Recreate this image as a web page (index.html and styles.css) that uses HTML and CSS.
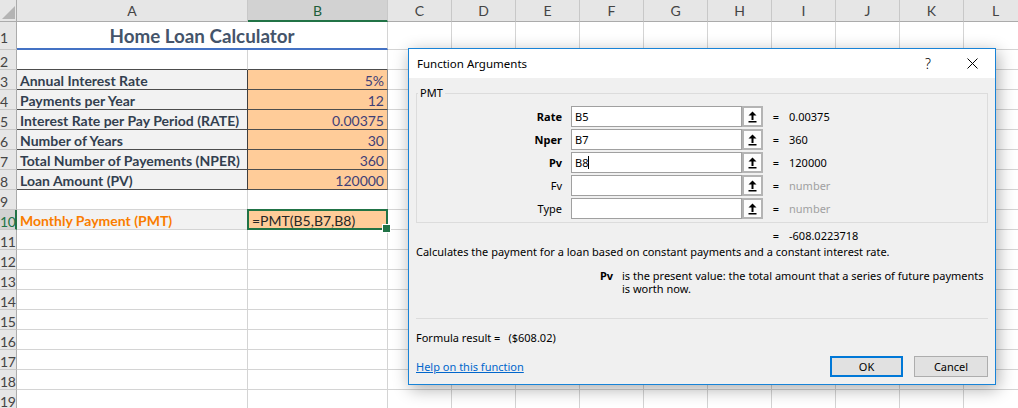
FILE: index.html
```html
<!DOCTYPE html>
<html lang="en">
<head>
<meta charset="utf-8">
<title>Home Loan Calculator - Function Arguments</title>
<link rel="stylesheet" href="styles.css">
</head>
<body>
<div class="sheet">
  <div class="corner"></div>
  <div class="ch">A</div><div class="ch sel">B</div><div class="ch">C</div><div class="ch">D</div><div class="ch">E</div><div class="ch">F</div><div class="ch">G</div><div class="ch">H</div><div class="ch">I</div><div class="ch">J</div><div class="ch">K</div><div class="ch">L</div>

  <div class="rh">1</div><div class="title">Home Loan Calculator</div>
  <div class="c"></div><div class="c"></div><div class="c"></div><div class="c"></div><div class="c"></div><div class="c"></div><div class="c"></div><div class="c"></div><div class="c"></div><div class="c"></div>

  <div class="rh">2</div><div class="c edge"></div><div class="c edge"></div>
  <div class="c"></div><div class="c"></div><div class="c"></div><div class="c"></div><div class="c"></div><div class="c"></div><div class="c"></div><div class="c"></div><div class="c"></div><div class="c"></div>

  <div class="rh">3</div><div class="c lbl">Annual Interest Rate</div><div class="c inp">5%</div>
  <div class="c"></div><div class="c"></div><div class="c"></div><div class="c"></div><div class="c"></div><div class="c"></div><div class="c"></div><div class="c"></div><div class="c"></div><div class="c"></div>

  <div class="rh">4</div><div class="c lbl">Payments per Year</div><div class="c inp">12</div>
  <div class="c"></div><div class="c"></div><div class="c"></div><div class="c"></div><div class="c"></div><div class="c"></div><div class="c"></div><div class="c"></div><div class="c"></div><div class="c"></div>

  <div class="rh">5</div><div class="c lbl">Interest Rate per Pay Period (RATE)</div><div class="c inp">0.00375</div>
  <div class="c"></div><div class="c"></div><div class="c"></div><div class="c"></div><div class="c"></div><div class="c"></div><div class="c"></div><div class="c"></div><div class="c"></div><div class="c"></div>

  <div class="rh">6</div><div class="c lbl">Number of Years</div><div class="c inp">30</div>
  <div class="c"></div><div class="c"></div><div class="c"></div><div class="c"></div><div class="c"></div><div class="c"></div><div class="c"></div><div class="c"></div><div class="c"></div><div class="c"></div>

  <div class="rh">7</div><div class="c lbl">Total Number of Payements (NPER)</div><div class="c inp">360</div>
  <div class="c"></div><div class="c"></div><div class="c"></div><div class="c"></div><div class="c"></div><div class="c"></div><div class="c"></div><div class="c"></div><div class="c"></div><div class="c"></div>

  <div class="rh">8</div><div class="c lbl">Loan Amount (PV)</div><div class="c inp">120000</div>
  <div class="c"></div><div class="c"></div><div class="c"></div><div class="c"></div><div class="c"></div><div class="c"></div><div class="c"></div><div class="c"></div><div class="c"></div><div class="c"></div>

  <div class="rh">9</div><div class="c"></div><div class="c"></div>
  <div class="c"></div><div class="c"></div><div class="c"></div><div class="c"></div><div class="c"></div><div class="c"></div><div class="c"></div><div class="c"></div><div class="c"></div><div class="c"></div>

  <div class="rh sel">10</div><div class="c pmt">Monthly Payment (PMT)</div><div class="c active">=PMT(B5,B7,B8)</div>
  <div class="c"></div><div class="c"></div><div class="c"></div><div class="c"></div><div class="c"></div><div class="c"></div><div class="c"></div><div class="c"></div><div class="c"></div><div class="c"></div>

  <div class="rh">11</div><div class="c"></div><div class="c"></div>
  <div class="c"></div><div class="c"></div><div class="c"></div><div class="c"></div><div class="c"></div><div class="c"></div><div class="c"></div><div class="c"></div><div class="c"></div><div class="c"></div>

  <div class="rh">12</div><div class="c"></div><div class="c"></div>
  <div class="c"></div><div class="c"></div><div class="c"></div><div class="c"></div><div class="c"></div><div class="c"></div><div class="c"></div><div class="c"></div><div class="c"></div><div class="c"></div>

  <div class="rh">13</div><div class="c"></div><div class="c"></div>
  <div class="c"></div><div class="c"></div><div class="c"></div><div class="c"></div><div class="c"></div><div class="c"></div><div class="c"></div><div class="c"></div><div class="c"></div><div class="c"></div>

  <div class="rh">14</div><div class="c"></div><div class="c"></div>
  <div class="c"></div><div class="c"></div><div class="c"></div><div class="c"></div><div class="c"></div><div class="c"></div><div class="c"></div><div class="c"></div><div class="c"></div><div class="c"></div>

  <div class="rh">15</div><div class="c"></div><div class="c"></div>
  <div class="c"></div><div class="c"></div><div class="c"></div><div class="c"></div><div class="c"></div><div class="c"></div><div class="c"></div><div class="c"></div><div class="c"></div><div class="c"></div>

  <div class="rh">16</div><div class="c"></div><div class="c"></div>
  <div class="c"></div><div class="c"></div><div class="c"></div><div class="c"></div><div class="c"></div><div class="c"></div><div class="c"></div><div class="c"></div><div class="c"></div><div class="c"></div>

  <div class="rh">17</div><div class="c"></div><div class="c"></div>
  <div class="c"></div><div class="c"></div><div class="c"></div><div class="c"></div><div class="c"></div><div class="c"></div><div class="c"></div><div class="c"></div><div class="c"></div><div class="c"></div>

  <div class="rh">18</div><div class="c"></div><div class="c"></div>
  <div class="c"></div><div class="c"></div><div class="c"></div><div class="c"></div><div class="c"></div><div class="c"></div><div class="c"></div><div class="c"></div><div class="c"></div><div class="c"></div>

  <div class="rh">19</div><div class="c"></div><div class="c"></div>
  <div class="c"></div><div class="c"></div><div class="c"></div><div class="c"></div><div class="c"></div><div class="c"></div><div class="c"></div><div class="c"></div><div class="c"></div><div class="c"></div>
</div>

<div class="dialog">
  <div class="titlebar">
    <span class="ttl">Function Arguments</span>
    <span class="help">?</span>
    <svg class="close" width="11" height="11" viewBox="0 0 11 11"><path d="M0.5 0.5 L10.5 10.5 M10.5 0.5 L0.5 10.5" stroke="#000" stroke-width="1" fill="none"/></svg>
  </div>
  <div class="dbody">
    <fieldset class="group">
      <legend>PMT</legend>
      <div class="args">
        <span class="lab b">Rate</span><span class="box">B5</span><span class="ref"><svg width="9" height="12" viewBox="0 0 9 12"><path d="M4.5 0.5 L8.5 4.5 H5.5 V9 H3.5 V4.5 H0.5 Z" fill="#000"/><rect x="0.5" y="10" width="8" height="1.5" fill="#000"/></svg></span><span class="eq">=</span><span class="val">0.00375</span>
        <span class="lab b">Nper</span><span class="box">B7</span><span class="ref"><svg width="9" height="12" viewBox="0 0 9 12"><path d="M4.5 0.5 L8.5 4.5 H5.5 V9 H3.5 V4.5 H0.5 Z" fill="#000"/><rect x="0.5" y="10" width="8" height="1.5" fill="#000"/></svg></span><span class="eq">=</span><span class="val">360</span>
        <span class="lab b">Pv</span><span class="box">B8<i class="caret"></i></span><span class="ref"><svg width="9" height="12" viewBox="0 0 9 12"><path d="M4.5 0.5 L8.5 4.5 H5.5 V9 H3.5 V4.5 H0.5 Z" fill="#000"/><rect x="0.5" y="10" width="8" height="1.5" fill="#000"/></svg></span><span class="eq">=</span><span class="val">120000</span>
        <span class="lab">Fv</span><span class="box"></span><span class="ref"><svg width="9" height="12" viewBox="0 0 9 12"><path d="M4.5 0.5 L8.5 4.5 H5.5 V9 H3.5 V4.5 H0.5 Z" fill="#000"/><rect x="0.5" y="10" width="8" height="1.5" fill="#000"/></svg></span><span class="eq">=</span><span class="val muted">number</span>
        <span class="lab">Type</span><span class="box"></span><span class="ref"><svg width="9" height="12" viewBox="0 0 9 12"><path d="M4.5 0.5 L8.5 4.5 H5.5 V9 H3.5 V4.5 H0.5 Z" fill="#000"/><rect x="0.5" y="10" width="8" height="1.5" fill="#000"/></svg></span><span class="eq">=</span><span class="val muted">number</span>
      </div>
    </fieldset>
    <div class="result"><span class="eq">=</span><span class="val">-608.0223718</span></div>
    <p class="desc">Calculates the payment for a loan based on constant payments and a constant interest rate.</p>
    <div class="argdesc"><b>Pv</b><span>is the present value: the total amount that a series of future payments is worth now.</span></div>
    <div class="sep"></div>
    <div class="formula">Formula result =<span class="fval">($608.02)</span></div>
    <div class="footer">
      <a class="helplink" href="#">Help on this function</a>
      <button class="btn ok" type="button">OK</button>
      <button class="btn" type="button">Cancel</button>
    </div>
  </div>
</div>
</body>
</html>
```
FILE: styles.css
```css
* { box-sizing: border-box; }
html, body { margin: 0; padding: 0; }
body {
  width: 1018px;
  height: 408px;
  overflow: hidden;
  background: #fff;
  position: relative;
  font-family: Lato, "Liberation Sans", sans-serif;
}

/* ---------- spreadsheet ---------- */
.sheet {
  display: grid;
  grid-template-columns: 17px 231px 140px repeat(10, 64px);
  grid-template-rows: 22px 28px repeat(18, 20px);
  font-size: 14px;
  color: #000;
  width: 1029px;
}
.corner {
  background: #e6e6e6;
  border-right: 1px solid #ababab;
  border-bottom: 1px solid #ababab;
  position: relative;
}
.corner::after {
  content: "";
  position: absolute;
  right: 1px;
  bottom: 2px;
  border-style: solid;
  border-width: 0 0 13px 13px;
  border-color: transparent transparent #b4b4b4 transparent;
}
.ch {
  background: #e6e6e6;
  border-right: 1px solid #c8c8c8;
  border-bottom: 1px solid #ababab;
  text-align: center;
  line-height: 22px;
  color: #444;
}
.ch.sel {
  background: #d2d2d2;
  border-bottom: 2px solid #217346;
  color: #1e5e3a;
}
.rh {
  background: #e6e6e6;
  border-right: 1px solid #ababab;
  border-bottom: 1px solid #c8c8c8;
  padding: 3px 0 0 0;
  display: flex;
  align-items: center;
  color: #444;
  letter-spacing: -0.3px;
}
.rh.sel {
  background: #d2d2d2;
  border-right: 2px solid #217346;
  color: #217346;
}
.c {
  border-right: 1px solid #d4d4d4;
  border-bottom: 1px solid #d4d4d4;
  white-space: nowrap;
  padding-top: 3px;
  line-height: 16px;
}
.title {
  grid-column: span 2;
  border-bottom: 2px solid #4472c4;
  border-right: 1px solid #d4d4d4;
  display: flex;
  align-items: center;
  justify-content: center;
  padding-top: 1px;
  font-weight: 700;
  font-size: 18.8px;
  color: #44546a;
}
.c.edge { border-bottom-color: #4d4d4d; }
.c.lbl {
  background: #f2f2f2;
  border-right-color: #3f3f3f;
  border-bottom-color: #4d4d4d;
  padding-left: 3px;
  font-weight: 700;
  color: #333f4f;
}
.c.inp {
  background: #ffcc99;
  border-right-color: #8c8c8c;
  border-bottom-color: #4d4d4d;
  text-align: right;
  padding-right: 3px;
  color: #3f3f76;
}
.c.pmt {
  background: #f2f2f2;
  padding-left: 3px;
  font-weight: 700;
  color: #fa7d00;
}
.c.active {
  background: #ffcc99;
  position: relative;
  padding-left: 4px;
  color: #262626;
}
.c.active::after {
  content: "";
  position: absolute;
  left: -1px;
  top: -1px;
  right: -1px;
  bottom: -1px;
  border: 2px solid #217346;
}
.c.active::before {
  content: "";
  position: absolute;
  right: -4px;
  bottom: -4px;
  width: 7px;
  height: 7px;
  background: #217346;
  border: 1px solid #fff;
  z-index: 1;
}

/* ---------- dialog ---------- */
.dialog {
  position: absolute;
  left: 408px;
  top: 48px;
  width: 588px;
  height: 337px;
  border: 1px solid #1883d7;
  background: #f0f0f0;
  box-shadow: 2px 4px 16px rgba(0, 0, 0, 0.33);
  font-family: "Noto Sans", "Open Sans", sans-serif;
  font-size: 11px;
  color: #000;
  display: flex;
  flex-direction: column;
}
.titlebar {
  height: 29px;
  flex: none;
  background: #fff;
  display: flex;
  align-items: center;
  padding-left: 8px;
  font-size: 11.5px;
}
.help {
  margin-left: auto;
  margin-right: 36px;
  font-size: 14px;
  font-weight: 300;
}
.close { margin-right: 17px; }
.dbody {
  flex: 1;
  padding: 7px 7px 0 7px;
  display: flex;
  flex-direction: column;
}
.group {
  margin: 0;
  padding: 5px 0 3px 0;
  border: 1px solid #dcdcdc;
  min-width: 0;
}
.group legend {
  margin-left: 1px;
  padding: 0 2px;
  line-height: 16px;
}
.args {
  display: grid;
  grid-template-columns: 154px 171px 21px 26px 1fr;
  grid-auto-rows: 21px;
  row-gap: 2px;
  align-items: center;
}
.lab {
  text-align: right;
  padding-right: 9px;
}
.lab.b { font-weight: 700; }
.box {
  height: 21px;
  border: 1px solid #a0a0a0;
  background: #fff;
  padding-left: 3px;
  line-height: 19px;
}
.caret {
  display: inline-block;
  width: 1px;
  height: 13px;
  background: #000;
  vertical-align: -2px;
}
.ref {
  height: 21px;
  border: 2px solid #b4b4b4;
  background: #fdfdfd;
  display: flex;
  align-items: center;
  justify-content: center;
}
.eq { text-align: center; width: 26px; flex: none; }
.muted { color: #a0a0a0; }
.result {
  display: flex;
  padding-left: 347px;
  margin-top: 5px;
  line-height: 16px;
}
.desc {
  margin: 0;
  line-height: 16px;
}
.argdesc {
  display: grid;
  grid-template-columns: 206px 1fr;
  margin-top: 9px;
  line-height: 13px;
}
.argdesc b {
  text-align: right;
  padding-right: 9px;
}
.sep {
  height: 1px;
  background: #dcdcdc;
  margin-top: 23px;
}
.formula {
  margin-top: 11px;
  line-height: 16px;
}
.fval { margin-left: 8px; }
.footer {
  display: flex;
  align-items: center;
  margin-top: 10px;
}
.helplink {
  color: #0066cc;
  text-decoration: underline;
  margin-right: auto;
}
.btn {
  font: inherit;
  width: 74px;
  height: 21px;
  padding: 0;
  background: #e1e1e1;
  border: 1px solid #adadad;
  color: #000;
}
.btn.ok {
  width: 73px;
  margin-right: 11px;
  border: 2px solid #0078d7;
}
```
